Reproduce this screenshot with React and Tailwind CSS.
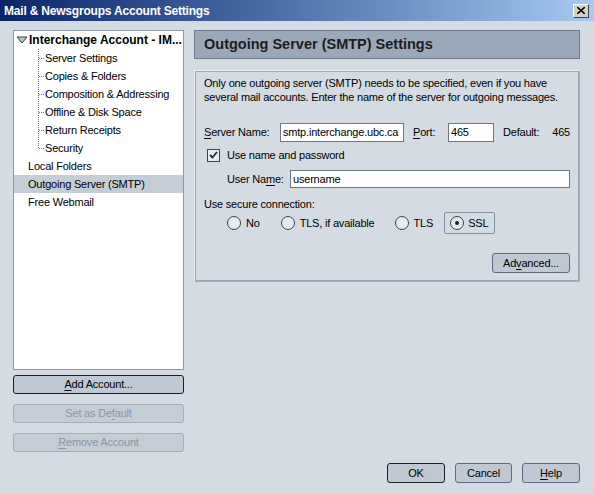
import React from "react";

const F = { fontFamily: '"Liberation Sans", Arial, sans-serif' };

function Conn({ last }) {
  return (
    <svg width="7" height="18" className="shrink-0">
      <line x1="0.5" y1="0" x2="0.5" y2={last ? 9 : 18} stroke="#7a7a7a" strokeDasharray="1 1" />
      <line x1="1" y1="9.5" x2="6" y2="9.5" stroke="#7a7a7a" strokeDasharray="1 1" />
    </svg>
  );
}

function U({ children }) {
  return <span className="underline underline-offset-2">{children}</span>;
}

function Btn({ children, className = "", disabled, def }) {
  return (
    <div
      className={
        "flex items-center justify-center rounded-[3px] border bg-[#bfc8d3] " +
        (def ? "border-[#1b1f26] border-[1.5px] " : "border-[#5f6b7c] ") +
        (disabled ? "border-[#a4adb9] text-[#8c96a3] bg-[#c4ccd6] " : "text-black ") +
        className
      }
    >
      {children}
    </div>
  );
}

function Radio({ checked }) {
  return (
    <div className="w-[14px] h-[14px] rounded-full border border-[#3c4450] bg-[#e6ebf0] flex items-center justify-center shrink-0">
      {checked && <div className="w-[4px] h-[4px] rounded-full bg-[#1b1f26]" />}
    </div>
  );
}

export default function App() {
  const children = [
    "Server Settings",
    "Copies & Folders",
    "Composition & Addressing",
    "Offline & Disk Space",
    "Return Receipts",
    "Security",
  ];
  return (
    <div className="w-[594px] h-[494px] bg-[#d5dbe2] flex flex-col text-[11px] tracking-[-0.2px] text-black overflow-hidden" style={F}>
      {/* title bar */}
      <div className="h-[22px] shrink-0 flex items-center justify-between pl-[4px] pr-[5px] bg-gradient-to-r from-[#0a246a] to-[#a6caf0] border-b border-[#d5dbe2]">
        <span className="text-white font-bold text-[12px] tracking-[-0.2px]">Mail &amp; Newsgroups Account Settings</span>
        <div className="w-[16px] h-[14px] bg-[#d4d0c8] border border-t-white border-l-white border-r-[#404040] border-b-[#404040] flex items-center justify-center">
          <svg width="8" height="7" viewBox="0 0 8 7">
            <path d="M0 0 L8 7 M8 0 L0 7" stroke="#000" strokeWidth="1.6" />
          </svg>
        </div>
      </div>

      <div className="flex-1 flex flex-col pl-[13px] pr-[14px] pt-[8px]">
        <div className="flex gap-[10px]">
          {/* left column */}
          <div className="w-[171px] flex flex-col">
            <div className="h-[340px] bg-white border border-[#8d98a6]">
              <div className="h-[18px] flex items-center pl-[2px]">
                <svg width="12" height="8" viewBox="0 0 12 8" className="mr-[1px]">
                  <path d="M1 1 L11 1 L6 7 Z" fill="#b9c1cb" stroke="#3a3f47" strokeWidth="1" />
                </svg>
                <span className="font-bold whitespace-nowrap text-[12px] tracking-[0px]">Interchange Account - IM...</span>
              </div>
              {children.map((c, i) => (
                <div key={c} className="h-[18px] flex items-center pl-[24px]">
                  <Conn last={i === children.length - 1} />
                  <span className="whitespace-nowrap">{c}</span>
                </div>
              ))}
              <div className="h-[18px] flex items-center pl-[14px]">Local Folders</div>
              <div className="h-[18px] flex items-center pl-[14px] bg-[#c5cdd7]">Outgoing Server (SMTP)</div>
              <div className="h-[18px] flex items-center pl-[14px]">Free Webmail</div>
            </div>
            <Btn def className="h-[19px] mt-[5px]"><span><U>A</U>dd Account...</span></Btn>
            <Btn disabled className="h-[19px] mt-[10px]"><span>Set as De<U>f</U>ault</span></Btn>
            <Btn disabled className="h-[19px] mt-[10px]"><span><U>R</U>emove Account</span></Btn>
          </div>

          {/* right column */}
          <div className="flex-1 flex flex-col">
            <div className="h-[29px] bg-[#9ba8b9] border border-[#6c7a8d] flex items-center pl-[9px]">
              <span className="font-bold text-[14.5px] tracking-[0px] text-[#1a1d22]">Outgoing Server (SMTP) Settings</span>
            </div>
            <div className="mt-[11px] h-[212px] border border-[#a7b1be] border-t-[#eef1f4] border-l-[#eef1f4] outline outline-1 outline-[#9aa4b1] -outline-offset-2 px-[9px] pt-[5px] flex flex-col">
              <p className="leading-[14px]">
                Only one outgoing server (SMTP) needs to be specified, even if you have several mail accounts. Enter the name of the server for outgoing messages.
              </p>
              <div className="flex items-center mt-[19px] h-[19px]">
                <span className="w-[76px]"><U>S</U>erver Name:</span>
                <div className="w-[124px] h-[19px] bg-white border border-[#6f7a89] flex items-center pl-[2px] overflow-hidden whitespace-nowrap">smtp.interchange.ubc.ca</div>
                <span className="ml-[9px] w-[35px]"><U>P</U>ort:</span>
                <div className="w-[46px] h-[19px] bg-white border border-[#6f7a89] flex items-center pl-[2px]">465</div>
                <span className="ml-[9px]">Default:</span>
                <span className="ml-auto">465</span>
              </div>
              <div className="flex items-center mt-[6px] h-[14px] pl-[3px]">
                <div className="w-[13px] h-[13px] border border-[#3c4450] bg-[#e6ebf0] flex items-center justify-center">
                  <svg width="9" height="8" viewBox="0 0 9 8">
                    <path d="M1 4 L3.5 6.5 L8 1" stroke="#1f2a38" strokeWidth="1.8" fill="none" />
                  </svg>
                </div>
                <span className="ml-[7px]">Use name and password</span>
              </div>
              <div className="flex items-center mt-[8px] h-[18px] pl-[23px]">
                <span className="w-[63px] whitespace-nowrap">User Na<U>m</U>e:</span>
                <div className="flex-1 h-[18px] bg-white border border-[#6f7a89] flex items-center pl-[2px]">username</div>
              </div>
              <div className="mt-[9px] leading-[14px]">Use secure connection:</div>
              <div className="flex items-center mt-[1px] pl-[23px] h-[22px]">
                <Radio />
                <span className="ml-[5px]">No</span>
                <div className="ml-[21px] flex items-center">
                  <Radio />
                  <span className="ml-[5px]">TLS, if available</span>
                </div>
                <div className="ml-[20px] flex items-center">
                  <Radio />
                  <span className="ml-[5px]">TLS</span>
                </div>
                <div className="ml-[11px] h-[22px] w-[51px] border border-[#848f9e] rounded-[2px] flex items-center pl-[5px]">
                  <Radio checked />
                  <span className="ml-[4px]">SSL</span>
                </div>
              </div>
              <div className="flex justify-end mt-[19px]">
                <Btn className="w-[78px] h-[20px]"><span>Ad<U>v</U>anced...</span></Btn>
              </div>
            </div>
          </div>
        </div>

        <div className="flex justify-end gap-[10px] mt-[11px]">
          <Btn def className="w-[58px] h-[20px]">OK</Btn>
          <Btn className="w-[57px] h-[20px]">Cancel</Btn>
          <Btn className="w-[58px] h-[20px]"><span><U>H</U>elp</span></Btn>
        </div>
      </div>
    </div>
  );
}
